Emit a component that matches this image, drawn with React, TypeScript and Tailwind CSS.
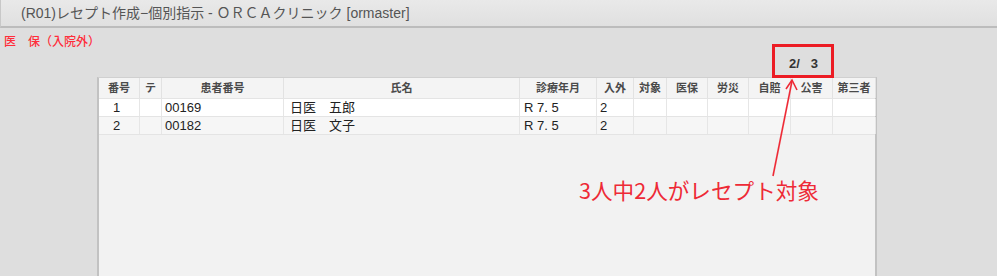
import React from 'react';

const cols = [
  { label: '番号', w: 'w-[41px]', align: 'justify-start pl-[14px]' },
  { label: 'テ', w: 'w-[22px]', align: 'justify-center' },
  { label: '患者番号', w: 'w-[122px]', align: 'justify-start pl-[3px]' },
  { label: '氏名', w: 'w-[236px]', align: 'justify-start pl-[6px]' },
  { label: '診療年月', w: 'w-[77px]', align: 'justify-start pl-[4px]' },
  { label: '入外', w: 'w-[37px]', align: 'justify-start pl-[3px]' },
  { label: '対象', w: 'w-[33px]', align: 'justify-start' },
  { label: '医保', w: 'w-[41px]', align: 'justify-start' },
  { label: '労災', w: 'w-[41px]', align: 'justify-start' },
  { label: '自賠', w: 'w-[42px]', align: 'justify-start' },
  { label: '公害', w: 'w-[42px]', align: 'justify-start' },
  { label: '第三者', w: 'w-[43px]', align: 'justify-start' },
];

const rows = [
  ['1', '', '00169', '日医　五郎', 'R 7. 5', '2', '', '', '', '', '', ''],
  ['2', '', '00182', '日医　文子', 'R 7. 5', '2', '', '', '', '', '', ''],
];

const font = { fontFamily: '"Liberation Sans", "Noto Sans CJK JP", sans-serif' };

export default function App() {
  return (
    <div className="relative w-[997px] h-[276px] overflow-hidden bg-[#dedede] flex flex-col" style={font}>
      {/* タイトルバー */}
      <div className="h-[28px] shrink-0 bg-gradient-to-b from-[#e9e9e9] to-[#e0e0e0] border-b-2 border-[#bcbcbc] border-l border-l-[#c8c8c8] flex items-center pl-[20px]">
        <span className="text-[14px] text-[#555555] leading-none">(R01)レセプト作成−個別指示 - ＯＲＣＡクリニック [ormaster]</span>
      </div>

      <div className="pl-[4px] pt-[7px] h-[22px] text-[12px] leading-[14px] font-medium text-[#ff2d3a]">医　保（入院外）</div>

      <div className="h-[27px] flex items-start pt-[7px] pl-[789px] text-[13px] leading-[14px] font-bold text-[#333333]">
        2/&nbsp;&nbsp;&nbsp;3
      </div>

      {/* 一覧 */}
      <div className="ml-[97px] w-[780px] flex-1 bg-[#f2f2f2] border-l-2 border-r-2 border-t border-[#c2c2c2] border-t-[#d0d0d0]">
        <div className="flex h-[21px] bg-[#f4f4f4] border-b border-[#e4e4e4]">
          {cols.map((c, i) => (
            <div key={i} className={`${c.w} shrink-0 flex items-center justify-center border-r border-[#e2e2e2] text-[11px] font-bold text-[#4a4a4a]`}>
              {c.label}
            </div>
          ))}
        </div>
        {rows.map((r, ri) => (
          <div key={ri} className={`flex h-[18px] border-b border-[#e4e4e4] ${ri === 0 ? 'bg-white' : 'bg-[#f6f6f6]'}`}>
            {r.map((v, ci) => (
              <div key={ci} className={`${cols[ci].w} ${cols[ci].align} shrink-0 flex items-center border-r border-[#e6e6e6] text-[13px] text-[#222222] whitespace-pre`}>
                {v}
              </div>
            ))}
          </div>
        ))}
      </div>

      {/* 注釈 */}
      <div className="absolute left-[772px] top-[44px] w-[62px] h-[34px] border-[3px] border-[#ec1c24]" />
      <svg className="absolute left-0 top-0 pointer-events-none" width="997" height="276">
        <line x1="773" y1="176" x2="792" y2="81" stroke="#ee2a36" strokeWidth="1.6" />
        <polyline points="786,89 792,80 797,90" fill="none" stroke="#ee2a36" strokeWidth="1.6" />
      </svg>
      <div className="absolute left-[579px] top-[178px] text-[21.6px] leading-[24px] text-[#ee2a36]" style={{ fontFamily: '"Noto Sans CJK JP", sans-serif', fontWeight: 400 }}>
        3人中2人がレセプト対象
      </div>
    </div>
  );
}
